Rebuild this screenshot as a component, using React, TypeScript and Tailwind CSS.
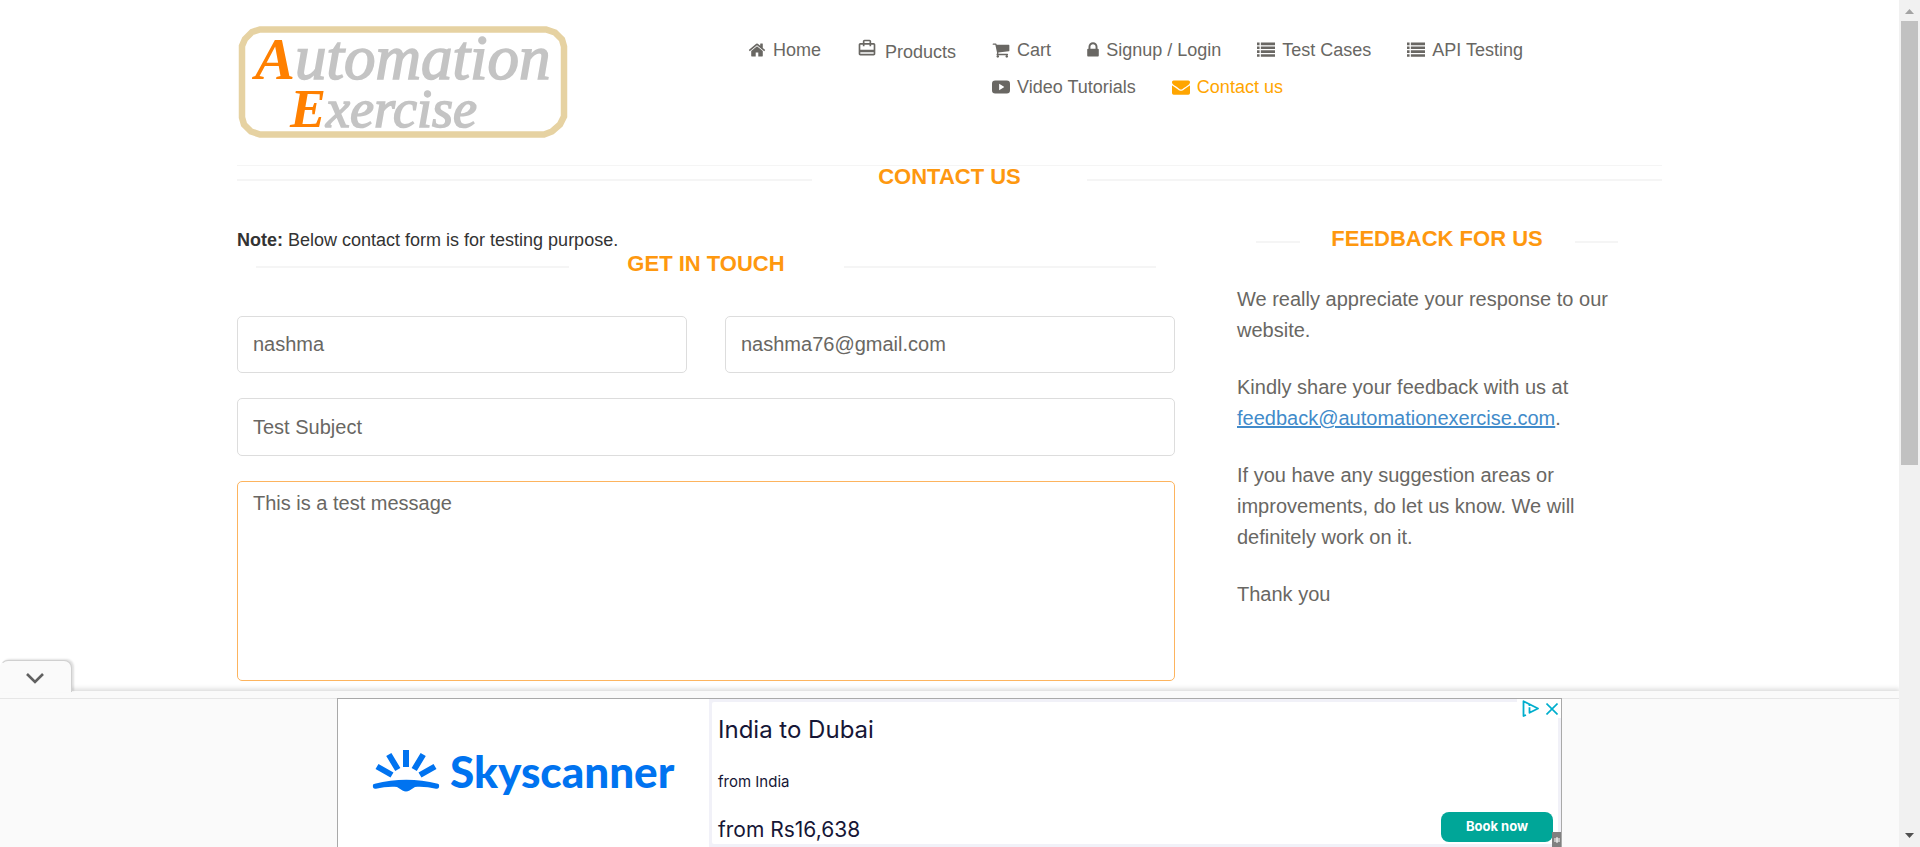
import type { ReactNode } from "react";

const iconPaths = {
  home: "M1472 992v480q0 26-19 45t-45 19h-384v-384h-256v384h-384q-26 0-45-19t-19-45v-480q0-1 .5-3t.5-3l575-474 575 474q1 2 1 6zm223-69l-62 74q-8 9-21 11h-3q-13 0-21-7l-692-577-692 577q-12 8-24 7-13-2-21-11l-62-74q-8-10-7-23.5t11-21.5l719-599q32-26 76-26t76 26l244 204v-195q0-14 9-23t23-9h192q14 0 23 9t9 23v408l219 182q10 8 11 21.5t-7 23.5z",
  cart: "M704 1536q0 52-38 90t-90 38-90-38-38-90 38-90 90-38 90 38 38 90zm896 0q0 52-38 90t-90 38-90-38-38-90 38-90 90-38 90 38 38 90zm128-1088v512q0 24-16.5 42.5t-40.5 21.5l-1044 122q13 60 13 70 0 16-24 64h920q26 0 45 19t19 45-19 45-45 19h-1024q-26 0-45-19t-19-45q0-11 8-31.5t16-36 21.5-40 15.5-29.5l-177-823h-204q-26 0-45-19t-19-45 19-45 45-19h256q16 0 28.5 6.5t19.5 15.5 13 24.5 8 26 5.5 29.5 4.5 26h1201q26 0 45 19t19 45z",
  lock: "M640 768h512v-192q0-106-75-181t-181-75-181 75-75 181v192zm832 96v576q0 40-28 68t-68 28h-960q-40 0-68-28t-28-68v-576q0-40 28-68t68-28h32v-192q0-184 132-316t316-132 316 132 132 316v192h32q40 0 68 28t28 68z",
  list: "M0 160h256v256H0zM384 160h1408v256H384zM0 544h256v256H0zM384 544h1408v256H384zM0 928h256v256H0zM384 928h1408v256H384zM0 1312h256v256H0zM384 1312h1408v256H384z",
  video: "M320 256h1152q320 0 320 320v640q0 320-320 320H320q-320 0-320-320V576q0-320 320-320zM711 1225l484-313q25-16 0-32L711 567z",
  envelope: "M1792 710v794q0 66-47 113t-113 47h-1472q-66 0-113-47t-47-113v-794q44 49 101 87 362 246 497 345 57 42 92.5 65.5t94.5 48 110 24.5h2q51 0 110-24.5t94.5-48 92.5-65.5q170-123 498-345 57-39 100-87zm0-294q0 79-49 151t-122 123q-376 261-468 325-10 7-42.5 31t-54 38.5-52 32.5-57.5 27-50 9h-2q-23 0-50-9t-57.5-27-52-32.5-54-38.5-42.5-31q-91-64-262-182.5t-205-142.5q-62-42-117-115.5t-55-136.5q0-78 41.5-130t118.5-52h1472q65 0 112.5 47t47.5 113z",
};

type IconName = keyof typeof iconPaths;

function Icon({ name, box = "0 0 1792 1792", className = "w-[18px]" }: { name: IconName; box?: string; className?: string }) {
  return (
    <svg viewBox={box} className={`h-[18px] shrink-0 ${className}`} fill="currentColor" fillRule="evenodd" aria-hidden="true">
      <path d={iconPaths[name]} />
    </svg>
  );
}

function NavItem({ icon, label, active = false }: { icon: ReactNode; label: string; active?: boolean }) {
  return (
    <li>
      <a href="#" className={`flex items-center gap-[7px] whitespace-nowrap ${active ? "text-[#ffa500]" : "text-[#696763]"}`}>
        {icon}
        {label}
      </a>
    </li>
  );
}

function Logo() {
  return (
    <a href="#" aria-label="Automation Exercise">
      <svg viewBox="0 0 328 114" className="h-[114px] w-[328px] overflow-visible" fontFamily="'Liberation Serif', serif" fontStyle="italic">
        <path d="M21 4.500h286l9 3 7 7 2 7v70l-4 8-8 7-8 3H21l-9-3-7-7-2-7V21l3-7 7-7z" fill="#fff" stroke="#e6d2a2" strokeWidth="6.5" />
        <text x="16" y="54" fontSize="60" fill="#c4c4c4">
          <tspan fontWeight="700" fill="#ff8000">A</tspan>
          <tspan fontSize="63" stroke="#c4c4c4" strokeWidth="1.600">utomation</tspan>
        </text>
        <text x="51" y="102" fontSize="54" fill="#c4c4c4">
          <tspan fontWeight="700" fill="#ff8000">E</tspan>
          <tspan stroke="#c4c4c4" strokeWidth="1.600">xercise</tspan>
        </text>
      </svg>
    </a>
  );
}

function Header() {
  return (
    <header className="flex items-start justify-between border-b border-[#f5f5f5] pt-[25px] pb-[26px] pl-[2px]">
      <Logo />
      <nav className="mr-[139px] flex pt-[10px] text-[18px] leading-[30px]">
        <ul className="flex gap-9 pr-9">
          <NavItem label="Home" icon={<Icon name="home" />} />
          <li>
            <a href="#" className="flex items-center gap-[8px] text-[#696763]">
              <svg viewBox="0 0 24 24" className="mb-[7px] h-[20px] w-[20px]" fill="currentColor" aria-hidden="true">
                <path d="M20 6h-3V4c0-1.11-.89-2-2-2H9c-1.11 0-2 .89-2 2v2H4c-1.11 0-2 .89-2 2v11c0 1.11.89 2 2 2h16c1.11 0 2-.89 2-2V8c0-1.11-.89-2-2-2zM9 4h6v2H9V4zm11 15H4v-2h16v2zm0-5H4V8h3v2h2V8h6v2h2V8h3v6z" />
              </svg>
              <span className="pt-[2px]">Products</span>
            </a>
          </li>
        </ul>
        <div className="flex flex-col gap-[7px]">
          <ul className="flex gap-9">
            <NavItem label="Cart" icon={<Icon name="cart" />} />
            <NavItem label="Signup / Login" icon={<Icon name="lock" box="320 0 1152 1792" className="w-[12px]" />} />
            <NavItem label="Test Cases" icon={<Icon name="list" />} />
            <NavItem label="API Testing" icon={<Icon name="list" />} />
          </ul>
          <ul className="flex gap-9">
            <NavItem label="Video Tutorials" icon={<Icon name="video" />} />
            <NavItem label="Contact us" active icon={<Icon name="envelope" />} />
          </ul>
        </div>
      </nav>
    </header>
  );
}

function Heading({ children, className = "" }: { children: ReactNode; className?: string }) {
  return (
    <h2 className={`flex items-center text-[22px] leading-[22px] font-bold text-[#fe980f] ${className}`}>
      <span className="mt-[5px] h-[2px] flex-1 bg-[#f5f5f5]" />
      <span className="w-[275px] text-center whitespace-nowrap">{children}</span>
      <span className="mt-[5px] h-[2px] flex-1 bg-[#f5f5f5]" />
    </h2>
  );
}

const fieldClass = "block w-full rounded-[5px] border bg-white px-[15px] text-[20px] text-[#696763] outline-none";

function ContactForm() {
  return (
    <form className="grid grid-cols-2 gap-x-[38px] gap-y-[25px] pt-[41px]">
      <input aria-label="Name" defaultValue="nashma" className={`${fieldClass} h-[57px] border-[#dddddd]`} />
      <input aria-label="Email" type="email" defaultValue="nashma76@gmail.com" className={`${fieldClass} h-[57px] border-[#dddddd]`} />
      <input aria-label="Subject" defaultValue="Test Subject" className={`${fieldClass} col-span-2 h-[58px] border-[#dddddd]`} />
      <textarea aria-label="Your message" defaultValue="This is a test message" className={`${fieldClass} col-span-2 h-[200px] resize-none border-[#fdb45e] py-[7px] leading-[28px]`} />
    </form>
  );
}

function Feedback() {
  return (
    <aside className="w-[425px] shrink-0">
      <Heading className="mr-[44px] ml-[19px]">FEEDBACK FOR US</Heading>
      <div className="mt-[34px] space-y-[26px] text-[20px] leading-[31px] text-[#696763]">
        <p>We really appreciate your response to our<br />website.</p>
        <p>
          Kindly share your feedback with us at<br />
          <a href="mailto:feedback@automationexercise.com" className="text-[#428bca] underline">feedback@automationexercise.com</a>.
        </p>
        <p>If you have any suggestion areas or<br />improvements, do let us know. We will<br />definitely work on it.</p>
        <p>Thank you</p>
      </div>
    </aside>
  );
}

function SkyscannerLogo() {
  return (
    <div className="flex w-[371px] shrink-0 items-center gap-[10px] pb-[4px] pl-[34px] text-[#0073f0]">
      <svg viewBox="0 0 68 44" className="h-[44px] w-[68px]" fill="none" stroke="currentColor" strokeWidth="6" aria-hidden="true">
        <path d="M34 1v17M16.800 5.500l9 15M51.200 5.500l-9 15M5 17.500l15 8.500M63 17.500l-15 8.500" />
        <path d="M1 35.500c-.6 3 .5 4.600 3 4.200 7-1.500 14-2.600 21-1.800l5.500 3.600q3.500 2 7 0l5.500-3.600c7-.8 14 .3 21 1.800 2.500.4 3.600-1.200 3-4.200l-1.200-.8q-31.500-8-63 0z" fill="currentColor" stroke="none" />
      </svg>
      <span className="font-['Lato',sans-serif] text-[44px] leading-[50px] font-black">Skyscanner</span>
    </div>
  );
}

function AdBar() {
  return (
    <section aria-label="Advertisement" className="relative shrink-0 bg-[#fafafa] pt-[7px] shadow-[0_-1px_5px_1px_rgba(0,0,0,0.15)]">
      <button aria-label="Collapse" className="absolute -top-[31px] left-0 flex h-[32px] w-[72px] items-center justify-center rounded-t-lg border border-b-0 border-[#d0d0d0] border-l-transparent bg-[#fafafa] pr-[2px] shadow-[2px_-1px_2px_rgba(0,0,0,0.12)]">
        <svg viewBox="0 0 18 11" className="mt-[3px] h-[11px] w-[18px]" fill="none" stroke="#616161" strokeWidth="2.6" aria-hidden="true">
          <path d="M1 1l8 8 8-8" />
        </svg>
      </button>
      <div className="flex justify-center border-t border-[#e6e6e6] bg-[#fafafa]">
        <div className="-mt-px flex h-[149px] w-[1225px] border border-b-0 border-[#a9a9a9] bg-white">
          <SkyscannerLogo />
          <div className="relative flex-1 bg-[#f1f1f8] p-[3px]">
            <div className="flex h-full flex-col items-start justify-between rounded-[2px] bg-white pt-[14px] pl-[6px] font-['Inter',sans-serif] text-[#161636]">
              <p className="text-[24px] leading-[28px]">India to Dubai</p>
              <p className="pt-[4px] text-[15px] leading-[20px]">from India</p>
              <p className="text-[21px] leading-[28px]">from Rs16,638</p>
            </div>
            <button className="absolute right-[8px] bottom-[5px] h-[30px] w-[112px] rounded-[8px] bg-[#00a698] font-['Inter',sans-serif] text-[13px] font-bold text-white">Book now</button>
            <div className="absolute top-0 right-0 flex h-[19px] items-center gap-[7px] bg-white pr-[3px] pl-[5px]">
              <svg viewBox="0 0 17 17" className="h-[17px] w-[17px]" fill="none" stroke="#00aecd" strokeWidth="1.800" strokeLinejoin="round" aria-hidden="true">
                <path d="M4 15L1.500 16V1.200L16 8.500 7.500 12.800V7.200" />
                <path d="M7.500 4.200v1.800" />
              </svg>
              <svg viewBox="0 0 12 12" className="h-[12px] w-[12px]" fill="none" stroke="#00aecd" strokeWidth="1.600" aria-hidden="true">
                <path d="M.5.500l11 11M11.500.500l-11 11" />
              </svg>
            </div>
            <span className="absolute right-0 bottom-0 flex h-[15px] w-[9px] items-center justify-center bg-[#808080]">
              <svg viewBox="0 0 6 6" className="h-[6px] w-[6px]" stroke="#fff" strokeWidth="1" aria-hidden="true">
                <path d="M3 0v6M0 2h6M0 4h6" />
              </svg>
            </span>
          </div>
        </div>
      </div>
    </section>
  );
}

function Scrollbar() {
  return (
    <div aria-hidden="true" className="relative z-10 flex w-[21px] shrink-0 flex-col items-center justify-between bg-[#f1f1f1] pt-[9px] pb-[9px]">
      <div className="flex h-[55%] w-full flex-col items-center gap-[7px]">
        <svg viewBox="0 0 9 5" className="h-[5px] w-[9px] shrink-0" fill="#a3a3a3"><path d="M4.500 0L9 5H0z" /></svg>
        <div className="w-[17px] flex-1 bg-[#c1c1c1]" />
      </div>
      <svg viewBox="0 0 9 5" className="h-[5px] w-[9px]" fill="#505050"><path d="M0 0h9L4.500 5z" /></svg>
    </div>
  );
}

export default function App() {
  return (
    <div className="flex h-screen overflow-hidden bg-white font-['Liberation_Sans',Arial,sans-serif]">
      <div className="flex min-w-0 flex-1 flex-col">
        <div className="min-h-0 flex-1 overflow-hidden">
          <div className="mx-auto w-full max-w-[1425px]">
            <Header />
            <main>
              <Heading>CONTACT US</Heading>
              <div className="flex justify-between pt-[40px]">
                <div className="w-[938px]">
                  <p className="text-[18px] leading-[25px] text-[#333]"><b>Note:</b> Below contact form is for testing purpose.</p>
                  <Heading className="mx-[19px]">GET IN TOUCH</Heading>
                  <ContactForm />
                </div>
                <Feedback />
              </div>
            </main>
          </div>
        </div>
        <AdBar />
      </div>
      <Scrollbar />
    </div>
  );
}
